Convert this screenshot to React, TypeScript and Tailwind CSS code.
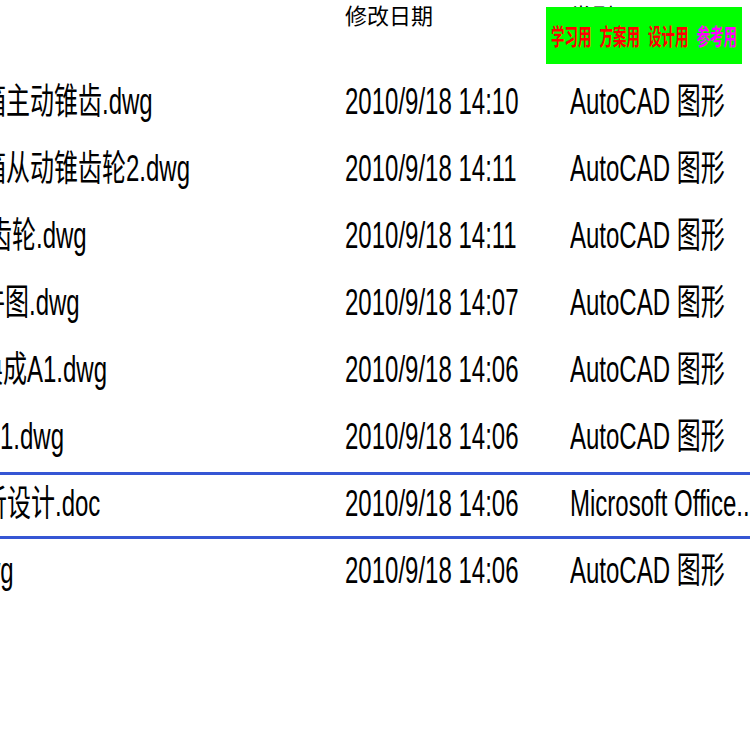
import React from "react";

type Row = { name: string; off: string; date: string; type: string; selected?: boolean };

const rows: Row[] = [
  { name: "减速箱主动锥齿.dwg", off: "-ml-[66px]", date: "2010/9/18 14:10", type: "AutoCAD 图形" },
  { name: "减速箱从动锥齿轮2.dwg", off: "-ml-[66px]", date: "2010/9/18 14:11", type: "AutoCAD 图形" },
  { name: "圆柱齿轮.dwg", off: "-ml-[60px]", date: "2010/9/18 14:11", type: "AutoCAD 图形" },
  { name: "零件图.dwg", off: "-ml-[43px]", date: "2010/9/18 14:07", type: "AutoCAD 图形" },
  { name: "装配图转换成A1.dwg", off: "-ml-[117px]", date: "2010/9/18 14:06", type: "AutoCAD 图形" },
  { name: "装配图1.dwg", off: "-ml-[72px]", date: "2010/9/18 14:06", type: "AutoCAD 图形" },
  { name: "机构分析设计.doc", off: "-ml-[89px]", date: "2010/9/18 14:06", type: "Microsoft Office...", selected: true },
  { name: "总图.dwg", off: "-ml-[85px]", date: "2010/9/18 14:06", type: "AutoCAD 图形" },
];

const font = "font-['Liberation_Sans','Noto_Sans_CJK_SC',sans-serif]";

function Txt({ children }: { children: React.ReactNode }) {
  return (
    <span className="inline-block whitespace-nowrap text-[24px] leading-none origin-center scale-y-[1.5]">
      {children}
    </span>
  );
}

export default function App() {
  return (
    <div className={`relative w-[750px] h-[750px] overflow-hidden bg-white text-black ${font}`}>
      {/* header */}
      <div className="grid grid-cols-[345px_225px_180px] h-[70px] items-start pt-[3px]">
        <div />
        <div className="text-[22px] leading-[22px] whitespace-nowrap font-['Noto_Sans_CJK_SC',sans-serif]">修改日期</div>
        <div className="text-[22px] leading-[22px] whitespace-nowrap font-['Noto_Sans_CJK_SC',sans-serif]">类型</div>
      </div>

      {/* rows */}
      <div className="flex flex-col">
        {rows.map((r, i) => (
          <div
            key={i}
            className={`grid grid-cols-[345px_225px_180px] h-[67px] items-center ${
              r.selected ? "border-y-[3px] border-[#3556d4]" : ""
            }`}
          >
            <div className="overflow-x-clip whitespace-nowrap">
              <div className={r.off}>
                <Txt>{r.name}</Txt>
              </div>
            </div>
            <div className="whitespace-nowrap">
              <Txt>{r.date}</Txt>
            </div>
            <div className="overflow-x-clip whitespace-nowrap">
              <Txt>{r.type}</Txt>
            </div>
          </div>
        ))}
      </div>

      {/* green watermark label */}
      <div className="absolute left-[546px] top-[7px] w-[196px] h-[57px] bg-[#00ff00] flex items-center justify-center gap-[8px] font-['Noto_Sans_CJK_SC',sans-serif] font-bold text-[13.5px] leading-none">
        <span className="inline-block scale-y-[1.7] text-[#ff0000]">学习用</span>
        <span className="inline-block scale-y-[1.7] text-[#ff0000]">方案用</span>
        <span className="inline-block scale-y-[1.7] text-[#ff0000]">设计用</span>
        <span className="inline-block scale-y-[1.7] text-[#ff00ff]">参考用</span>
      </div>
    </div>
  );
}
